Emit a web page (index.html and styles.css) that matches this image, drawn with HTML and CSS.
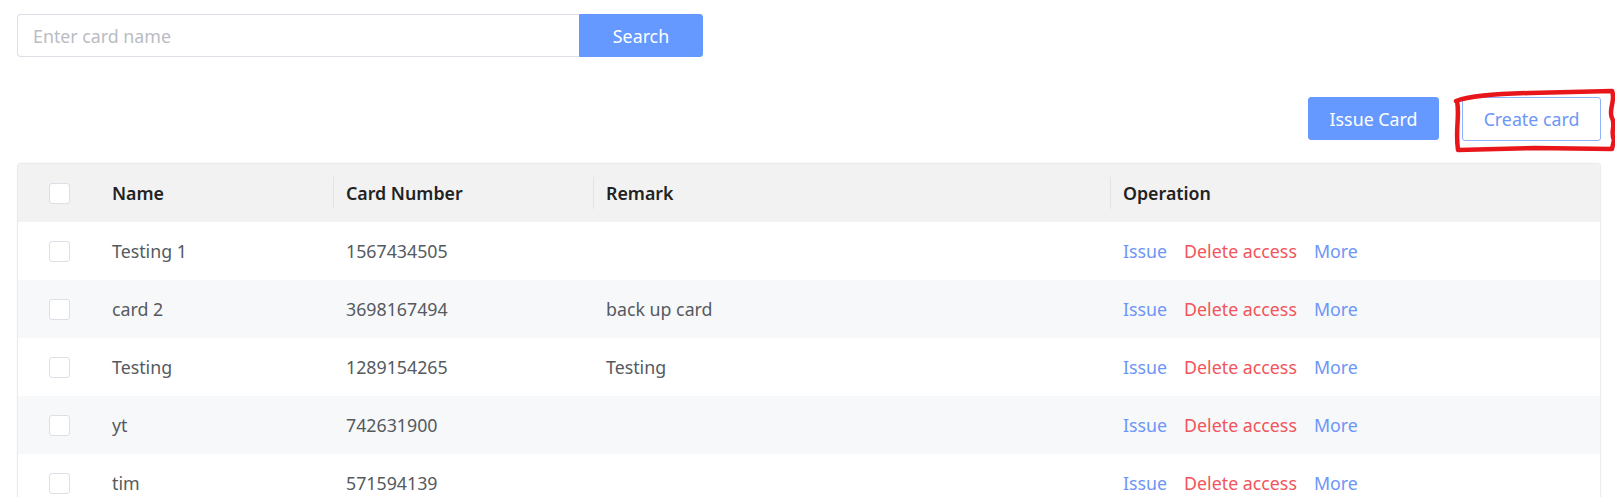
FILE: index.html
```html
<!DOCTYPE html>
<html>
<head>
<meta charset="utf-8">
<link rel="stylesheet" href="styles.css">
</head>
<body>
<div class="page">
  <div class="search-row">
    <input class="search-input" type="text" placeholder="Enter card name">
    <button class="btn btn-primary search-btn">Search</button>
  </div>
  <div class="actions">
    <button class="btn btn-primary action-btn">Issue Card</button>
    <button class="btn btn-outline action-btn create-btn">Create card</button>
  </div>
  <div class="table">
    <div class="row head">
      <div class="cell c-check"><span class="checkbox"></span></div>
      <div class="cell c-name">Name</div>
      <div class="cell c-num div">Card Number</div>
      <div class="cell c-remark div">Remark</div>
      <div class="cell c-op div">Operation</div>
    </div>
    <div class="row">
      <div class="cell c-check"><span class="checkbox"></span></div>
      <div class="cell c-name">Testing 1</div>
      <div class="cell c-num">1567434505</div>
      <div class="cell c-remark"></div>
      <div class="cell c-op"><a class="link">Issue</a><a class="link danger">Delete access</a><a class="link">More</a></div>
    </div>
    <div class="row stripe">
      <div class="cell c-check"><span class="checkbox"></span></div>
      <div class="cell c-name">card 2</div>
      <div class="cell c-num">3698167494</div>
      <div class="cell c-remark">back up card</div>
      <div class="cell c-op"><a class="link">Issue</a><a class="link danger">Delete access</a><a class="link">More</a></div>
    </div>
    <div class="row">
      <div class="cell c-check"><span class="checkbox"></span></div>
      <div class="cell c-name">Testing</div>
      <div class="cell c-num">1289154265</div>
      <div class="cell c-remark">Testing</div>
      <div class="cell c-op"><a class="link">Issue</a><a class="link danger">Delete access</a><a class="link">More</a></div>
    </div>
    <div class="row stripe">
      <div class="cell c-check"><span class="checkbox"></span></div>
      <div class="cell c-name">yt</div>
      <div class="cell c-num">742631900</div>
      <div class="cell c-remark"></div>
      <div class="cell c-op"><a class="link">Issue</a><a class="link danger">Delete access</a><a class="link">More</a></div>
    </div>
    <div class="row">
      <div class="cell c-check"><span class="checkbox"></span></div>
      <div class="cell c-name">tim</div>
      <div class="cell c-num">571594139</div>
      <div class="cell c-remark"></div>
      <div class="cell c-op"><a class="link">Issue</a><a class="link danger">Delete access</a><a class="link">More</a></div>
    </div>
  </div>
</div>
<svg class="scribble" width="170" height="72" viewBox="0 0 170 72">
  <path d="M11,16 C25,11 45,9 85,8 L167,6 C171,15 163,25 167,33 C171,40 165,47 169,55 L167,64 L90,63 L13,65 C10,45 15,30 12,16" fill="none" stroke="#e8161b" stroke-width="4.5" stroke-linejoin="round" stroke-linecap="round"/>
</svg>
</body>
</html>
```

FILE: styles.css
```css
html, body {
  margin: 0;
  padding: 0;
  background: #ffffff;
  overflow: hidden;
}
body {
  font-family: "Noto Sans", "Open Sans", sans-serif;
  font-size: 17.8px;
  color: #555a60;
  width: 1615px;
  height: 497px;
  position: relative;
}
.page {
  padding: 14px 14px 0 17px;
}
.search-row {
  display: flex;
  height: 43px;
}
.search-input {
  box-sizing: border-box;
  width: 562px;
  height: 43px;
  border: 1px solid #dcdfe6;
  border-right: none;
  border-radius: 4px 0 0 4px;
  padding: 0 15px;
  font-family: inherit;
  font-size: 17.8px;
  color: #555;
  outline: none;
}
.search-input::placeholder {
  color: #b9bcc2;
}
.btn {
  font-family: inherit;
  font-size: 17.8px;
  cursor: pointer;
  box-sizing: border-box;
}
.btn-primary {
  background: #6699ff;
  color: #ffffff;
  border: 1px solid #6699ff;
}
.search-btn {
  width: 124px;
  height: 43px;
  border-radius: 0 3px 3px 0;
}
.actions {
  display: flex;
  justify-content: flex-end;
  gap: 23px;
  margin-top: 40px;
}
.action-btn {
  height: 43px;
  border-radius: 3px;
}
.btn-primary.action-btn {
  width: 131px;
}
.btn-outline {
  background: #ffffff;
  color: #6d96f7;
  border: 1px solid #8fb0fb;
}
.create-btn {
  width: 139px;
  height: 44px;
}
.table {
  margin-top: 22px;
  border: 1px solid #ebebeb;
  border-radius: 3px 3px 0 0;
  box-shadow: 0 0 3px rgba(0,0,0,0.04);
}
.row {
  display: flex;
  height: 58px;
  align-items: center;
  background: #ffffff;
}
.row.stripe {
  background: #f7f8fa;
}
.row.head {
  background: #f2f2f2;
  height: 58px;
  color: #222222;
  font-weight: 600;
}
.cell {
  box-sizing: border-box;
  height: 100%;
  display: flex;
  align-items: center;
  white-space: nowrap;
}
.cell.div {
  position: relative;
}
.cell.div::before {
  content: "";
  position: absolute;
  left: 0;
  top: 13px;
  bottom: 13px;
  width: 1px;
  background: #e3e3e3;
}
.c-check {
  width: 82px;
  justify-content: center;
}
.c-name {
  width: 233px;
  padding-left: 12px;
}
.c-num {
  width: 260px;
  padding-left: 13px;
}
.c-remark {
  width: 517px;
  padding-left: 13px;
}
.c-op {
  flex: 1;
  padding-left: 13px;
  gap: 17px;
}
.checkbox {
  display: inline-block;
  box-sizing: border-box;
  width: 21px;
  height: 21px;
  border: 1px solid #dcdfe6;
  border-radius: 3px;
  background: #ffffff;
}
.link {
  color: #6d96f7;
  text-decoration: none;
}
.link.danger {
  color: #f2545b;
}
.scribble {
  position: absolute;
  left: 1445px;
  top: 85px;
  overflow: visible;
}
```
